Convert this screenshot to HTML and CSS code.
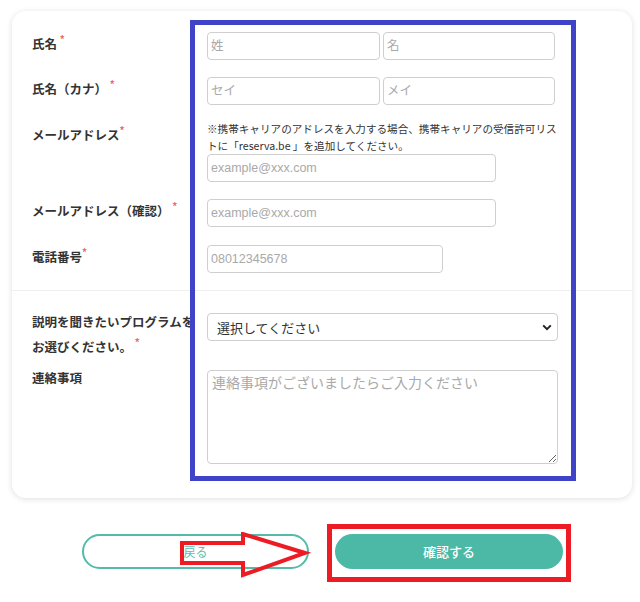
FILE: index.html
```html
<!DOCTYPE html>
<html lang="ja">
<head>
<meta charset="utf-8">
<link rel="stylesheet" href="styles.css">
</head>
<body>
<div class="page">
  <div class="card">
    <div class="section top">
      <div class="row">
        <div class="label">氏名 <span class="req">*</span></div>
        <div class="field pair">
          <input class="in half" placeholder="姓">
          <input class="in half" placeholder="名">
        </div>
      </div>
      <div class="row row-kana">
        <div class="label">氏名（カナ） <span class="req">*</span></div>
        <div class="field pair">
          <input class="in half" placeholder="セイ">
          <input class="in half" placeholder="メイ">
        </div>
      </div>
      <div class="row row-note">
        <div class="label label-note">メールアドレス<span class="req">*</span></div>
        <div class="field">
          <p class="note">※携帯キャリアのアドレスを入力する場合、携帯キャリアの受信許可リス<br>トに「reserva.be 」を追加してください。</p>
          <input class="in mail" placeholder="example@xxx.com">
        </div>
      </div>
      <div class="row row-confirm">
        <div class="label">メールアドレス（確認） <span class="req">*</span></div>
        <div class="field">
          <input class="in mail" placeholder="example@xxx.com">
        </div>
      </div>
      <div class="row">
        <div class="label">電話番号<span class="req">*</span></div>
        <div class="field">
          <input class="in tel" placeholder="08012345678">
        </div>
      </div>
    </div>
    <div class="sep"></div>
    <div class="section bottom">
      <div class="row row-select">
        <div class="label label-wide">説明を聞きたいプログラムを<br>お選びください。 <span class="req">*</span></div>
        <div class="field">
          <div class="select-wrap">
            <select class="sel">
              <option>選択してください</option>
            </select>
            <svg class="chev" width="10" height="7" viewBox="0 0 10 7"><path d="M1.2 1.4 L5 5.1 L8.8 1.4" fill="none" stroke="#222" stroke-width="2"/></svg>
          </div>
        </div>
      </div>
      <div class="row">
        <div class="label label-memo">連絡事項</div>
        <div class="field">
          <textarea class="ta" placeholder="連絡事項がございましたらご入力ください"></textarea>
        </div>
      </div>
    </div>
  </div>
  <div class="buttons">
    <button class="btn back">戻る</button>
    <button class="btn confirm">確認する</button>
  </div>

  <div class="ann-blue"></div>
  <div class="ann-red"></div>
  <svg class="ann-arrow" width="134" height="48" viewBox="0 0 134 48">
    <path d="M3 11 L64 11 L64 2 L126 21 L64 43 L64 31 L3 31 Z" fill="none" stroke="#ed1c24" stroke-width="4" stroke-linejoin="miter"/>
  </svg>
</div>
</body>
</html>
```

FILE: styles.css
```css
* { box-sizing: border-box; }
html, body { margin: 0; padding: 0; background: #fff; }
body {
  font-family: "Noto Sans CJK JP", "Liberation Sans", sans-serif;
  color: #333;
}
.page {
  position: relative;
  width: 640px;
  height: 602px;
  overflow: hidden;
  padding-top: 11px;
}
.card {
  margin-left: 12px;
  width: 620px;
  background: #fff;
  border-radius: 14px;
  box-shadow: 0 1px 6px rgba(0, 0, 0, 0.13);
  padding-top: 21px;
  padding-bottom: 34px;
}
.section.top { padding-bottom: 17px; }
.section.bottom { padding-top: 22px; }
.sep { height: 1px; background: #efefef; }
.row {
  display: flex;
  align-items: flex-start;
  margin-bottom: 17px;
}
.row:last-child { margin-bottom: 0; }
.row.row-kana { margin-bottom: 15px; }
.row.row-confirm { margin-bottom: 18px; }
.row.row-select { margin-bottom: 29px; height: 28px; }
.label {
  flex: 0 0 195px;
  width: 195px;
  margin-top: -3px;
  padding-left: 20px;
  font-size: 12.5px;
  font-weight: 700;
  line-height: 20px;
  color: #333;
  white-space: nowrap;
}
.label-note { padding-top: 3px; }
.label-wide { margin-top: -1px; }
.label-memo { margin-top: -2px; }
.req {
  color: #e86a6e;
  font-size: 10px;
  font-weight: 700;
  vertical-align: 6px;
}
.field { display: flex; flex-direction: column; }
.pair { flex-direction: row; gap: 3px; }
.in {
  height: 28px;
  border: 1px solid #cfcfcf;
  border-radius: 4px;
  background: #fff;
  padding: 0 3px;
  font-family: "Liberation Sans", "Noto Sans CJK JP", sans-serif;
  font-size: 12.5px;
  color: #333;
  outline: none;
}
.in::placeholder { color: #a9a9a9; }
.half { width: 173px; }
.pair .half:last-child { width: 172px; }
.mail { width: 289px; }
.tel { width: 236px; }
.note {
  margin: 0;
  width: 355px;
  font-size: 10.6px;
  line-height: 17px;
  color: #333;
  white-space: nowrap;
}
.select-wrap { position: relative; width: 351px; }
.sel {
  appearance: none;
  -webkit-appearance: none;
  width: 351px;
  height: 28px;
  border: 1px solid #cfcfcf;
  border-radius: 4px;
  background: #fff;
  padding: 0 9px;
  font-family: "Noto Sans CJK JP", sans-serif;
  font-size: 13px;
  color: #333;
  outline: none;
}
.chev {
  position: absolute;
  right: 6px;
  top: 11px;
  pointer-events: none;
}
.ta {
  width: 351px;
  height: 94px;
  border: 1px solid #cfcfcf;
  border-radius: 4px;
  padding: 2px 4px;
  font-family: "Noto Sans CJK JP", sans-serif;
  font-size: 14px;
  line-height: 18px;
  color: #333;
  outline: none;
  resize: vertical;
  display: block;
}
.ta::placeholder { color: #a9a9a9; }
.buttons {
  display: flex;
  gap: 26px;
  padding-left: 82px;
  margin-top: 36px;
}
.btn {
  width: 227px;
  height: 35px;
  border-radius: 18px;
  font-family: "Noto Sans CJK JP", sans-serif;
  cursor: pointer;
  padding: 0;
}
.back {
  background: #fff;
  border: 2px solid #55bba8;
  color: #5cc0ae;
  font-size: 12px;
}
.confirm {
  width: 228px;
  background: #4bb9a6;
  border: none;
  color: #fff;
  font-size: 13px;
  font-weight: 500;
}
.ann-blue {
  position: absolute;
  left: 190px;
  top: 20px;
  width: 386px;
  height: 461px;
  border: 5px solid #3f43c8;
  pointer-events: none;
}
.ann-red {
  position: absolute;
  left: 327px;
  top: 524px;
  width: 244px;
  height: 58px;
  border: 5px solid #ed1c24;
  pointer-events: none;
}
.ann-arrow {
  position: absolute;
  left: 179px;
  top: 532px;
  pointer-events: none;
}
```
